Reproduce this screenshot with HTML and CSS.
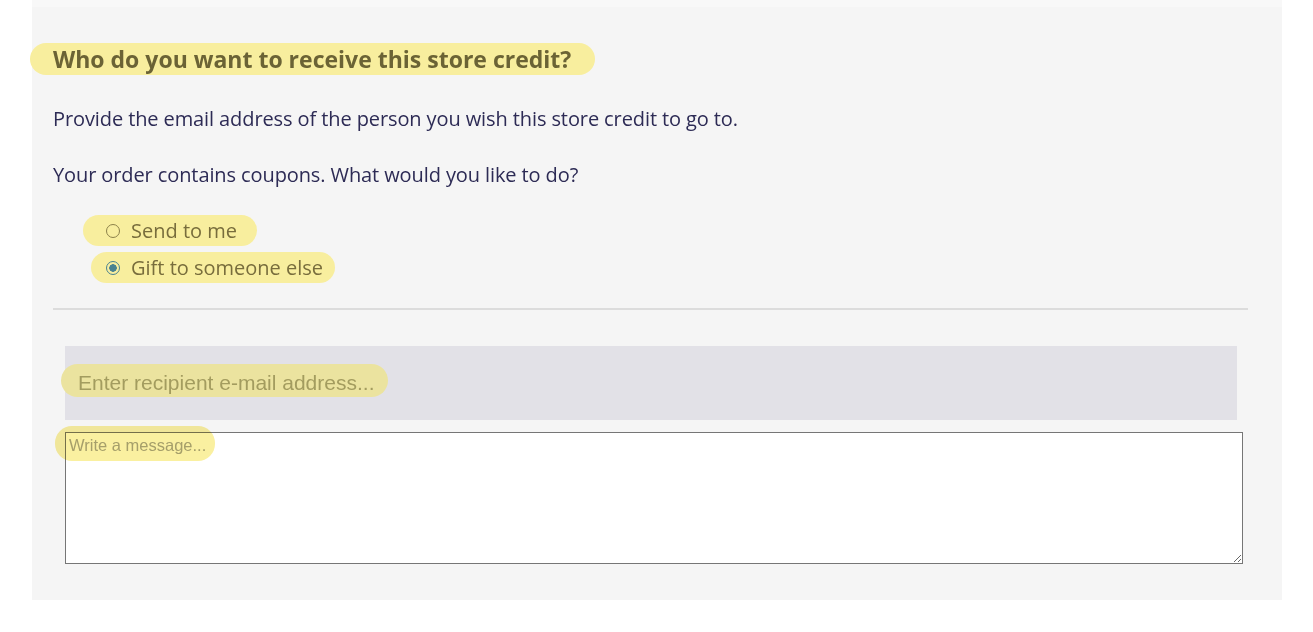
FILE: index.html
```html
<!DOCTYPE html>
<html>
  <head>
    <title>Store credit recipient</title>
    <link rel="stylesheet" href="styles.css">
  </head>
  <body>
    <div class="credit-panel">
      <div class="top-strip"></div>
      <div class="panel-body">
        <h2 class="panel-title"><span class="marker marker-title">Who do you want to receive this store credit?</span></h2>
        <p class="panel-text first-text">Provide the email address of the person you wish this store credit to go to.</p>
        <p class="panel-text">Your order contains coupons. What would you like to do?</p>

        <div class="choice-list">
          <label class="choice marker marker-first">
            <input type="radio" name="recipient" value="me">
            <span>Send to me</span>
          </label>
          <label class="choice marker marker-second">
            <input type="radio" name="recipient" value="gift" checked>
            <span>Gift to someone else</span>
          </label>
        </div>

        <hr class="divider">

        <form class="gift-form" onsubmit="return false">
          <div class="email-field">
            <span class="field-marker email-marker"></span>
            <input type="email" class="email-input" placeholder="Enter recipient e-mail address...">
          </div>
          <div class="message-field">
            <textarea class="message-input" placeholder="Write a message..."></textarea>
            <span class="field-marker message-marker"></span>
          </div>
        </form>
      </div>
    </div>
  </body>
</html>
```

FILE: styles.css
```css
body {
  margin: 0;
  background-color: #ffffff;
  font-family: "Open Sans", "Noto Sans", sans-serif;
}

.credit-panel {
  width: 1250px;
  margin-left: 32px;
  background-color: #f5f5f5;
}

.top-strip {
  height: 7px;
  background-color: #f8f8f8;
}

.panel-body {
  padding: 36px 34px 36px 21px;
}

/* yellow highlighter strokes */
.marker {
  display: inline-block;
  background-color: #f8ee9e;
  border-radius: 16px;
}

.panel-title {
  margin: 0;
  font-size: 23px;
  font-weight: 700;
  line-height: 32px;
  color: #6b6335;
}

.marker-title {
  margin-left: -23px;
  padding: 0 24px 0 23px;
}

.panel-text {
  margin: 28px 0 0;
  font-size: 20px;
  line-height: 28px;
  letter-spacing: -0.1px;
  color: #2d2b55;
}

.first-text {
  margin-top: 30px;
}

.choice-list {
  display: flex;
  flex-direction: column;
  align-items: flex-start;
  margin-top: 26px;
}

.choice {
  display: flex;
  align-items: center;
  height: 31px;
  font-size: 20px;
  color: #786d3c;
}

.marker-first {
  margin-left: 30px;
  padding: 0 20px 0 23px;
}

.marker-second {
  margin-left: 38px;
  margin-top: 6px;
  padding: 0 12px 0 15px;
}

.choice input {
  appearance: none;
  width: 14px;
  height: 14px;
  margin: 0 11px 0 0;
  border: 1px solid #8c814a;
  border-radius: 50%;
  background: transparent;
}

.choice input:checked {
  border-color: #4a8290;
  background: radial-gradient(circle, #4a8290 0 3.5px, transparent 4px);
}

.divider {
  margin: 25px 0 0;
  border: 0;
  border-top: 2px solid #dcdcdc;
}

.gift-form {
  margin: 36px 0 0 12px;
}

.email-field {
  position: relative;
  width: 1172px;
  height: 74px;
  background-color: #e2e1e7;
}

.field-marker {
  position: absolute;
  background-color: #ebe39f;
  border-radius: 17px;
  pointer-events: none;
}

.email-marker {
  left: -4px;
  top: 18px;
  width: 327px;
  height: 33px;
}

.email-input {
  position: relative;
  box-sizing: border-box;
  width: 100%;
  height: 100%;
  padding: 0 13px;
  border: 0;
  background: transparent;
  font-family: "Liberation Sans", Arial, sans-serif;
  font-size: 21px;
}

.email-input::placeholder {
  color: #a39c5f;
}

.message-field {
  position: relative;
  margin-top: 12px;
  width: 1178px;
}

.message-input {
  display: block;
  box-sizing: border-box;
  width: 100%;
  height: 132px;
  padding: 3px 3px;
  border: 1px solid #767676;
  background-color: #ffffff;
  font-family: "Liberation Sans", Arial, sans-serif;
  font-size: 16.5px;
  resize: vertical;
}

.message-input::placeholder {
  color: #a9a9a9;
}

.message-marker {
  left: -10px;
  top: -6px;
  width: 160px;
  height: 35px;
  background-color: #faf0a0;
  mix-blend-mode: multiply;
}
```
